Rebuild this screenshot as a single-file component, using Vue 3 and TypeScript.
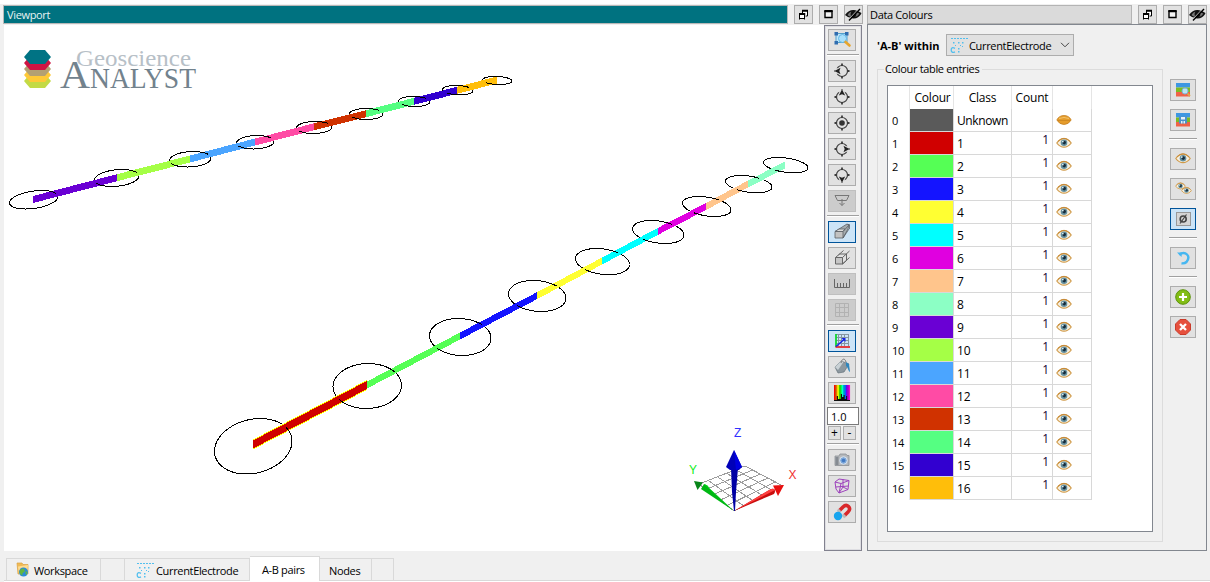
<script setup lang="ts">
interface Entry { id: number; colour: string; name: string }
type Pt = [number, number]
type Ring = [number, number, number, number, number]

const palette = ['#5a5a5a', '#d00000', '#55ff55', '#1414ff', '#ffff32', '#00ffff', '#e000e0', '#ffc58c', '#8cffc5', '#6a00d4', '#a5ff46', '#4ba5ff', '#ff4ba5', '#d03200', '#55ff82', '#3200d0', '#ffbe0a']
const entries: Entry[] = palette.map((colour, id) => ({ id, colour, name: id === 0 ? 'Unknown' : String(id) }))

const near: Pt[] = [[253, 444.5], [367, 385], [460, 336], [537, 295.7], [602, 261], [658, 231.3], [706, 206.5], [748, 184], [785, 165]]
const far: Pt[] = [[33, 199.5], [117, 177.7], [190, 159], [255, 142], [314, 126.8], [366, 113.7], [414, 101.3], [457, 90.3], [497, 80]]
// Each ring: bounding box left, right, top, bottom and the x offset of its top point
const nearRings: Ring[] = [[214.5, 292, 418.5, 474, 7], [333, 401.5, 363.5, 408.5, 1], [429.5, 491, 318.5, 355.5, -2], [508.5, 566, 280.5, 311.5, -4], [575.5, 629.5, 248.5, 274.7, -6], [632.5, 684, 220.5, 243.5, -7], [682.5, 731, 196.5, 216.5, -8], [725.5, 772, 175.5, 192.8, -8], [763.5, 808, 157.5, 172.8, -8]]
const farRings: Ring[] = [[9.5, 58, 190.5, 209, 8], [94.5, 139, 169.5, 186.5, 5], [169.5, 211, 151.5, 167, 3], [236.5, 274, 135.5, 149, 2], [296.5, 332, 121.5, 133.5, 1], [349.5, 383, 108.5, 119.5, 0], [398.5, 430, 96.5, 106.5, -1], [442.5, 473, 85.5, 94.8, -2], [482.5, 512, 76.5, 84.5, -2]]

function segment(a: Pt, b: Pt, h: number): string {
  return `${a[0]},${a[1] - h} ${b[0]},${b[1] - h} ${b[0]},${b[1] + h} ${a[0]},${a[1] + h}`
}
function segments(line: Pt[], h: number, first: number) {
  return line.slice(1).map((p, i) => ({ points: segment(line[i], p, first === 1 && i === 0 ? h + 0.5 : h), colour: palette[first + i] }))
}
function lineY(line: Pt[], x: number): number {
  let i = 0
  while (i < line.length - 2 && x > line[i + 1][0]) i++
  const [a, b] = [line[i], line[i + 1]]
  return a[1] + ((x - a[0]) / (b[0] - a[0])) * (b[1] - a[1])
}
function ringPoints([l, r, t, b, off]: Ring): Pt[] {
  const cx = (l + r) / 2, cy = (t + b) / 2, w = (r - l) / 2, h = (b - t) / 2
  const phi = Math.asin(off / w)
  return Array.from({ length: 145 }, (_, i) => {
    const a = (i * Math.PI) / 72
    return [cx + w * Math.cos(a), cy - h * Math.sin(a + phi)] as Pt
  })
}
function path(pts: Pt[]): string {
  return pts.map((p, i) => `${i ? 'L' : 'M'}${p[0].toFixed(2)} ${p[1].toFixed(2)}`).join('')
}
// Part of a ring that passes in front of the electrode line
function frontPath(ring: Ring, line: Pt[], first: boolean): string {
  const cx = (ring[0] + ring[1]) / 2
  const pts = ringPoints(ring)
  let d = ''
  for (let i = 1; i < pts.length; i++) {
    const [x, y] = pts[i]
    const below = y > lineY(line, x)
    const front = x < cx ? below : first ? below : !below
    if (front) d += path([pts[i - 1], pts[i]])
  }
  return d
}
const rings = [...nearRings, ...farRings].map(r => path(ringPoints(r)))
const fronts = [...nearRings.map((r, i) => frontPath(r, near, i === 0)), ...farRings.map(r => frontPath(r, far, false))]
const bars = [...segments(near, 3.5, 1), ...segments(far, 3.5, 9)]

const O: Pt = [734, 511], X: Pt = [783, 486], Y: Pt = [699, 484]
const grid: string[] = []
for (let i = 0; i <= 5; i++) {
  const k = i / 5
  const T: Pt = [745, 466]
  const mix = (a: Pt, b: Pt): Pt => [a[0] + (b[0] - a[0]) * k, a[1] + (b[1] - a[1]) * k]
  grid.push(path([mix(O, X), mix(Y, T)]), path([mix(O, Y), mix(X, T)]))
}

const tools = ['zoom', '|', 'west', 'north', 'centre', 'east', 'south', 'down!', '|', 'persp*', 'ortho', 'ruler!', 'grid!', '|', 'axes*', 'fill', 'spectrum']
const tools2 = ['camera', 'box', 'magnet']
const sideTools = ['tableZoom', 'tableSave', '|', 'eye', 'eyes', 'null*', '|', 'undo', '|', 'add', 'remove']
const base = (t: string) => t.replace(/[!*]/, '')
const state = (t: string) => ({ off: t.endsWith('!'), on: t.endsWith('*') })
const turn: Record<string, number> = { west: 0, north: 90, east: 180, south: 270 }
const hues = ['#f00', '#f60', '#fc0', '#cf0', '#3f0', '#0f6', '#0fc', '#0cf', '#06f', '#60f', '#c0f', '#f0c']
</script>

<template>
  <div class="app">
    <svg class="defs" width="0" height="0">
      <defs>
        <symbol id="eye" viewBox="0 0 16 12">
          <path d="M.8 6Q4 1.600 8 1.600T15.200 6Q12 10.200 8 10.200T.8 6Z" fill="#f6efe0" stroke="#d09a48" stroke-width="1.200" />
          <circle cx="8" cy="5.800" r="3.300" fill="#64909f" /><circle cx="8.200" cy="5.600" r="1.800" fill="#172c3b" /><circle cx="6.800" cy="4.600" r=".9" fill="#d9edf4" />
          <path d="M2 4.400Q4.800 1.300 8 1.300T14 4.400" fill="none" stroke="#c78a38" />
        </symbol>
        <symbol id="dots" viewBox="0 0 18 16">
          <g fill="#52bfee">
            <path d="M1 1h2v1H1zM4 1h2v1H4zM7 1h2v1H7zM10 1h2v1h-2zM13 1h2v1h-2zM16 1h2v1h-2z" />
            <path d="M3 5h1.500v1.500H3zM8 5h1.500v1.500H8zM12 5h1.500v1.500H12zM5 8h1v1H5zM10 8h1v1h-1z M8 11h1.500v1.500H8zM12 9h1v1h-1zM8 14h1.500v1.500H8z" />
          </g>
          <path d="M5 11.300Q1.200 9.500 1.200 13T5 14.800" fill="none" stroke="#52bfee" stroke-width="1.300" />
        </symbol>
        <symbol id="restore" viewBox="0 0 19 19"><path d="M5 9h6v5H5zM8 5h6v6h-3V9H8z" fill="#fff" /><path d="M8.500 8.500V6M8 5.500h6M13.500 5v6H11.500M5.500 8v6.500M5 9h6.500M10.500 8v6.500M5 13.500h6" fill="none" stroke="#000" stroke-width="1" /><path d="M8 5.800h6M5 9h6" stroke="#000" stroke-width="2" /></symbol>
        <symbol id="max" viewBox="0 0 19 19"><path d="M6 6.500h7v6H6z" fill="#f4f4f4" stroke="#000" stroke-width="1.400" /><path d="M5.300 6h8.400" stroke="#000" stroke-width="2" /></symbol>
        <symbol id="hide" viewBox="0 0 19 19">
          <path d="M1 10Q5 4.500 10 5T17.500 8.500Q14 14 9 13.500T1 10Z" fill="#111" />
          <path d="M3.500 10Q5 7.300 7.300 6.800Q5.800 9 7 11.800Q4.800 11.500 3.500 10ZM12 7Q14 7.500 15.300 8.700Q13.800 11 11.300 12Q13 10 12 7Z" fill="#777" />
          <path d="M4 15L15 3.500" stroke="#ddd" stroke-width="1" /><path d="M5 15.500L16 4" stroke="#000" stroke-width="1.400" />
        </symbol>
      </defs>
    </svg>

    <main class="work">
      <section class="view">
        <header class="bar">
          <div class="title teal"><span>Viewport</span></div>
          <div class="wbtns">
            <i class="wb"><svg><use href="#restore" /></svg></i><i class="wb"><svg><use href="#max" /></svg></i><i class="wb"><svg><use href="#hide" /></svg></i>
          </div>
        </header>
        <div class="body">
          <svg class="scene" viewBox="4 25 820 526">
            <g>
              <path d="M24 81l6-7h15l6 7-6 7H30z" fill="#c3da45" />
              <path d="M24 75l6-7h15l6 7-6 7H30z" fill="#fec938" />
              <path d="M24 69l6-7h15l6 7-6 7H30z" fill="#b3a073" />
              <path d="M24 63l6-7h15l6 7-6 7H30z" fill="#cf1443" />
              <path d="M24 57l6-7h15l6 7-6 7H30z" fill="#007384" />
            </g>
            <g class="logo">
              <text x="76" y="66" font-size="23" textLength="115" lengthAdjust="spacingAndGlyphs" fill="#b7c0c7">Geoscience</text>
              <text x="60" y="88" font-size="41" textLength="30" lengthAdjust="spacingAndGlyphs" fill="#72828d">A</text>
              <text x="90" y="88" font-size="29" textLength="106" lengthAdjust="spacingAndGlyphs" fill="#72828d">NALYST</text>
            </g>
            <g shape-rendering="crispEdges">
              <path v-for="(d, i) in rings" :key="'r' + i" :d="d" fill="none" stroke="#000" />
              <polygon :points="segment(near[0], near[1], 5)" fill="#ffff00" />
              <polygon v-for="(b, i) in bars" :key="'b' + i" :points="b.points" :fill="b.colour" />
              <path v-for="(d, i) in fronts" :key="'f' + i" :d="d" fill="none" stroke="#000" />
              <path v-for="(d, i) in grid" :key="'g' + i" :d="d" fill="none" stroke="#9c9c9c" />
            </g>
            <g>
              <path d="M734 511L701 489L704 484Q708 485 709 488Z" fill="#00b814" /><path d="M734 511L704 484Q708 485 709 488Z" fill="#00e01a" />
              <path d="M694 481l9 1.500-5.500 7.500z" fill="#08861a" />
              <path d="M734 511L770 489.500Q775 487 775 492L774 494Z" fill="#c90d0d" /><path d="M734 511L771 489Q774 488 775 490Z" fill="#ff4040" />
              <path d="M773 485.500l11-.500-6 11z" fill="#e80f0f" />
              <path d="M731 468h7l-2 24-1 19h-1l-2-19z" fill="#0000a4" />
              <path d="M734 450l8 17-3 3h-9l-4-3z" fill="#0000b8" /><path d="M734 450l2 20 6-3z" fill="#0000e0" />
            </g>
            <g class="axis">
              <text x="734" y="436.500" fill="#3030ff">Z</text><text x="689" y="474" fill="#10ee20">Y</text><text x="788.500" y="479" fill="#f03030">X</text>
            </g>
          </svg>

          <aside class="tools">
            <template v-for="(t, i) in tools" :key="i">
              <hr v-if="t === '|'">
              <button v-else class="tb" :class="state(t)">
                <svg viewBox="0 0 26 20">
                  <template v-if="t === 'zoom'">
                    <path d="M7 3.500h11v9H7z" fill="#bfe6fa" stroke="#559fc9" /><path d="M5.500 2h3.500v3.500H5.500zM16 2h3.500v3.500H16zM5.500 11h3.500v3.500H5.500z" fill="#2f6db0" />
                    <circle cx="13.500" cy="8.500" r="4" fill="#a9e0fb" stroke="#62b6e6" /><path d="M16.500 12l4 3.500" stroke="#e7a52c" stroke-width="2.600" stroke-linecap="round" />
                  </template>
                  <g v-else-if="base(t) in turn || t === 'centre'" fill="none" stroke="#3c3c3c">
                    <circle cx="13" cy="10" r="5.500" stroke-width="1.200" />
                    <path d="M13 2.500v2.500M13 15v2.500M5.500 10H8M18 10h2.500" stroke-width="1.800" />
                    <circle v-if="t === 'centre'" cx="13" cy="10" r="2.800" fill="#333" stroke="none" />
                    <g v-else stroke="none" :transform="`rotate(${turn[t]} 13 10)`">
                      <path d="M6.200 7.200h3v5.600h-3z" fill="#e1e1e1" /><path d="M5.500 10l6-3.200-1.200 3.200 1.200 3.200z" fill="#222" />
                    </g>
                  </g>
                  <path v-else-if="t === 'down!'" d="M6 4.500h14l-2.500 5h-9zM13 8v6.500M10.500 12l2.500 2.500 2.500-2.500" fill="none" stroke="#777" />
                  <g v-else-if="t === 'persp*'" stroke="#5a6066" stroke-width=".8">
                    <path d="M6 9.500L18 2l2 1-1 4-5 9z" fill="#a5abae" /><path d="M6 9.500L10 7h6l-2 2.500z" fill="#dcdcdc" /><path d="M6 9.500h8V16H6z" fill="#c2c2c2" /><path d="M14 9.500L20 3M14 16l6-9M18.500 2.500h2V7" fill="none" />
                  </g>
                  <g v-else-if="t === 'ortho'" fill="none" stroke="#666"><path d="M6.500 9.500h7v6.500h-7z" fill="#c6c6c6" /><path d="M6.500 9.500l4-3.500h7v6.500l-4 3.500M13.500 9.500l7-6.500M9.500 7l5-4.500M13.500 16l7-6.500" /></g>
                  <path v-else-if="t === 'ruler!'" d="M5.500 5v8.500h15V5M8.500 9v4.500M11.500 9v4.500M14.500 9v4.500M17.500 9v4.500" fill="none" stroke="#666" />
                  <path v-else-if="t === 'grid!'" d="M6.500 3.500h13v13h-13zM10.500 3.500v13M15.500 3.500v13M6.500 7.500h13M6.500 12.500h13" fill="none" stroke="#b2b2b2" />
                  <g v-else-if="t === 'axes*'" fill="none">
                    <path d="M7 3.500h13M7 6.500h13M7 9.500h13M7 12.500h13M9.500 3v12M12.500 3v12M15.500 3v12M19.500 3v12" stroke="#8495a0" />
                    <path d="M7 3v13" stroke="#10d530" stroke-width="1.800" /><path d="M6.500 16H21" stroke="#e72b2b" stroke-width="1.800" /><path d="M7 15.500l8-7" stroke="#1522e8" stroke-width="1.500" /><path d="M12.500 7h4v4z" fill="#1522e8" />
                  </g>
                  <g v-else-if="t === 'fill'"><path d="M6 10l6-6 8 3-5 8-6 1z" fill="#8d989f" stroke="#64717a" stroke-width=".7" /><path d="M6 10l6-6 2.500 1-5.500 8z" fill="#c9d1d5" /><path d="M12 6c1-5 4-5 5-1" fill="none" stroke="#777" /><path d="M17 5l3 2 1 8c-2-1-2-5-4-6z" fill="#2f86bd" /></g>
                  <g v-else-if="t === 'spectrum'">
                    <rect x="5" y="2" width="16" height="16" fill="#111" />
                    <rect v-for="(h, k) in hues" :key="k" :x="5 + k * 1.333" y="2" width="1.400" :height="[15, 15, 11, 14, 14, 9, 12, 10, 14, 11, 15, 15][k]" :fill="h" />
                  </g>
                </svg>
              </button>
            </template>
            <div class="scale">1.0</div>
            <div class="pm"><button>+</button><button>-</button></div>
            <hr>
            <button v-for="t in tools2" :key="t" class="tb">
              <svg viewBox="0 0 26 20">
                <g v-if="t === 'camera'"><path d="M6 6h4l1-2h6l1 1.500h2v10H6z" fill="#b5b8bb" stroke="#8b8f94" stroke-width=".8" /><path d="M6.500 7h3v8h-3z" fill="#858b92" /><circle cx="14.500" cy="10.500" r="3.800" fill="#7da8da" stroke="#dce5ef" /><circle cx="14.500" cy="10.500" r="1.800" fill="#4279c2" /></g>
                <path v-else-if="t === 'box'" d="M6 6l6 1.500 8-3-1 9-9 3.500-3-4zM6 6l4-3 10 1.500M12 7.500L10 17M6.500 11l13-1M14 3v8l-4 6M14 11l5 2.500" fill="none" stroke="#9e43bd" />
                <g v-else fill="none"><path d="M10 9l4-4q3-3 5.500-.5T19 10l-4 4" stroke="#d9282b" stroke-width="3.600" /><path d="M9 10l2-2M14 15l2-2" stroke="#bbb" stroke-width="3.600" /><circle cx="9" cy="14" r="4.200" fill="#17a5ee" /></g>
              </svg>
            </button>
          </aside>
        </div>
      </section>

      <section class="data">
        <header class="bar">
          <div class="title"><span>Data Colours</span></div>
          <div class="wbtns">
            <i class="wb"><svg><use href="#restore" /></svg></i><i class="wb"><svg><use href="#max" /></svg></i><i class="wb"><svg><use href="#hide" /></svg></i>
          </div>
        </header>
        <div class="panel">
          <div class="pick">
            <b>'A-B' within</b>
            <div class="combo"><svg class="dots"><use href="#dots" /></svg><span>CurrentElectrode</span><svg class="chev" viewBox="0 0 10 6"><path d="M1 .8l4 4 4-4" fill="none" stroke="#444" /></svg></div>
          </div>
          <div class="cols">
            <fieldset class="group">
              <legend>Colour table entries</legend>
              <div class="table">
                <div class="row head"><span /><span>Colour</span><span>Class</span><span>Count</span><span /></div>
                <div v-for="e in entries" :key="e.id" class="row">
                  <span class="id">{{ e.id }}</span>
                  <span :style="{ background: e.colour }" />
                  <span class="name" :class="{ unk: e.id === 0 }">{{ e.name }}</span>
                  <span class="count">{{ e.id ? 1 : '' }}</span>
                  <span class="vis">
                    <svg v-if="e.id" viewBox="0 0 16 12"><use href="#eye" /></svg>
                    <svg v-else viewBox="0 0 16 12"><path d="M.8 6Q3 1.500 8 1.500T15.200 6Q12.500 10.500 8 10.500T.8 6Z" fill="#e59c2b" stroke="#c58225" stroke-width=".8" /><path d="M3 4.500Q8 2.500 13 4.500" fill="none" stroke="#f3c46c" /><path d="M1.500 6.500h13" stroke="#c98421" stroke-width=".8" /></svg>
                  </span>
                </div>
              </div>
            </fieldset>
            <aside class="side">
              <template v-for="(t, i) in sideTools" :key="i">
                <hr v-if="t === '|'">
                <button v-else class="tb" :class="state(t)">
                  <svg viewBox="0 0 24 20">
                    <g v-if="t.startsWith('table')">
                      <path d="M5 3h14v4.500H5z" fill="#3d97e2" /><path d="M5 7.500h14V12H5z" fill="#7dbb22" /><path d="M5 12h14v4.500H5z" fill="#ef6247" />
                      <template v-if="t === 'tableZoom'"><circle cx="14" cy="11" r="3" fill="#bde4f3" stroke="#78b7d9" /><path d="M16.500 13.500l2.500 2.500" stroke="#dda64f" stroke-width="1.800" /></template>
                      <g v-else><path d="M8 6.500h8v7H8z" fill="#4a91cb" /><path d="M10 7h4v2.500h-4zM10 11h1.500v2.500H10zM12.500 11H14v2.500h-1.500z" fill="#e6f1f8" /></g>
                    </g>
                    <use v-else-if="t === 'eye'" href="#eye" x="4" y="3.500" width="16" height="12" />
                    <g v-else-if="t === 'eyes'"><use href="#eye" x="4" y="3" width="11" height="8.250" /><use href="#eye" x="10" y="7.500" width="11" height="8.250" /></g>
                    <g v-else-if="t === 'null*'" fill="none"><rect x="5.500" y="3.500" width="14" height="13" fill="#d5d5d5" stroke="#999" /><circle cx="12.200" cy="10" r="3" stroke="#444" stroke-width="1.600" /><path d="M9 14.500l6.500-9" stroke="#444" stroke-width="1.200" /></g>
                    <g v-else-if="t === 'undo'"><path d="M8 6.500Q13 3.500 16 6.500T15.500 14Q13.500 15.800 10.500 15.200" fill="none" stroke="#46b7f1" stroke-width="2.400" /><path d="M6 4.500l5 0-.5 4.500z" fill="#46b7f1" /></g>
                    <g v-else-if="t === 'add'"><circle cx="12" cy="10" r="7.300" fill="#82bd14" stroke="#5d940d" /><path d="M12 6v8M8 10h8" stroke="#fff" stroke-width="2.200" /></g>
                    <g v-else><path d="M9 2.500h6l4.500 4.500v6L15 17.500H9L4.500 13V7z" fill="#e6503d" stroke="#c93b2b" /><path d="M9 7l6 6M15 7l-6 6" stroke="#fff" stroke-width="2.300" /></g>
                  </svg>
                </button>
              </template>
            </aside>
          </div>
        </div>
      </section>
    </main>

    <nav class="tabs">
      <div class="tab ws"><svg viewBox="0 0 16 16"><path d="M2 1h5l1 1.500h5V12H3z" fill="#f0ba55" stroke="#d9a044" stroke-width=".7" /><path d="M3 4.500L13 3l-1 9H4z" fill="#ffdc91" /><circle cx="8.500" cy="10" r="4.500" fill="#2b8bd8" /><path d="M5.500 7.500q3-2 4 0t-1 3-1 3q-3-1-3-4zM10.500 9l2 1-1 3-1-1z" fill="#63b640" /></svg><span>Workspace</span></div>
      <div class="tab gap1" />
      <div class="tab ce"><svg class="dots"><use href="#dots" /></svg><span>CurrentElectrode</span></div>
      <div class="tab active"><span>A-B pairs</span></div>
      <div class="tab nodes"><span>Nodes</span></div>
      <div class="tab gap2" />
    </nav>
  </div>
</template>

<style>
body { margin: 0; background: #f0f0f0; overflow: hidden; }
</style>
<style scoped>
* { box-sizing: border-box; }
.app { width: 1210px; height: 582px; display: flex; flex-direction: column; background: #f0f0f0; border-top: 4px solid #fff; font: 12px "Open Sans", sans-serif; letter-spacing: -.34px; color: #000; white-space: nowrap; }
.defs { display: block; height: 0; flex: none; }
svg { display: block; }
button { font: inherit; padding: 0; margin: 0; }
.work { display: flex; gap: 4px; height: 547px; padding: 1px 3px 0; }
.view { width: 860px; display: flex; flex-direction: column; }
.data { width: 340px; display: flex; flex-direction: column; }
.bar { display: flex; justify-content: space-between; height: 19px; flex: none; }
.title { height: 19px; border: 1px solid #b4b4b4; background: #dadada; width: 265px; line-height: 18px; padding-left: 2px; }
.teal { width: 785px; background: #007280; color: #e6f2f3; border-color: #b8b8b8; padding-left: 3px; }
.title span { display: inline-block; font-size: 11px; }
.wbtns { display: flex; gap: 6px; }
.wb { width: 19px; height: 19px; border: 1px solid #adadad; background: #e1e1e1; }
.wb svg { width: 19px; height: 19px; margin: -1px; }
.body { display: flex; margin-left: 1px; margin-top: 1px; height: 526px; }
.scene { width: 820px; height: 526px; background: #fff; flex: none; }
.logo { font-family: "Liberation Serif", serif; letter-spacing: 0; }
.axis { font: 12px "Liberation Sans", sans-serif; }
.tools { width: 38px; height: 526px; border: 1px solid #82828f; box-shadow: inset 0 0 0 1px #dedee2; padding: 3px 0 0 3px; display: flex; flex-direction: column; gap: 4px; }
.tb { width: 28px; height: 22px; flex: none; border: 1px solid #adadad; background: #e1e1e1; }
.tb svg { width: 26px; height: 20px; }
.tb.off { background: #ccc; border-color: #bfbfbf; }
.tb.on { background: #cce4f7; border-color: #00549a; }
hr { width: 32px; height: 2px; flex: none; margin: -1px 0 0 -1px; border: 0; border-top: 1px solid #a0a0a0; background: #fff; }
.scale { width: 32px; height: 18px; margin: -1px 0 0 -1px; border: 1px solid #7a7a7a; background: #fff; font-size: 11px; line-height: 18px; padding-left: 3px; letter-spacing: 0; }
.pm { display: flex; gap: 2px; height: 14px; margin-top: -3px; }
.pm button { width: 13px; height: 14px; border: 1px solid #adadad; background: #e1e1e1; line-height: 12px; letter-spacing: 0; }
.panel { height: 527px; border: 1px solid #82878f; }
.pick { display: flex; height: 31px; padding: 9px 0 0 9px; }
.pick b { width: 69px; font-size: 11px; line-height: 23px; letter-spacing: 0; }
.combo { width: 128px; height: 22px; border: 1px solid #adadad; background: #e1e1e1; display: flex; align-items: center; font-size: 11px; padding-left: 3px; }
.dots { width: 18px; height: 16px; }
.combo span { width: 82px; margin-left: 1px; padding-top: 1px; }
.chev { width: 10px; height: 6px; margin-left: 9px; }
.cols { display: flex; }
.group { width: 286px; height: 481px; margin: 5px 0 0 9px; padding: 8px 0 0 9px; border: 1px solid #dcdcdc; min-width: 0; }
.group legend { font-size: 11px; padding: 0 3px 0 1px; margin-left: -3px; height: 17px; line-height: 15px; }
.table { width: 266px; height: 447px; background: #fff; border: 1px solid #82878f; margin-top: -1px; letter-spacing: -.2px; }
.row { width: 204px; height: 23px; display: grid; grid-template-columns: 22px 44px 58px 41px 39px; line-height: 24px; }
.row span { height: 23px; border-right: 1px solid #d8d8d8; border-bottom: 1px solid #d8d8d8; }
.row .id { border-bottom: 0; border-right-color: #e5e5e5; padding-left: 4px; font-size: 11px; }
.head span { border-bottom: 0; text-align: center; border-right-color: #e5e5e5; }
.head span:nth-child(2) { padding-left: 2px; }
.row .name { padding-left: 3px; }
.row .unk { letter-spacing: -.4px; }
.row .count { text-align: right; padding-right: 3px; line-height: 16px; color: #200030; }
.vis svg { width: 16px; height: 12px; margin: 5px 0 0 3px; }
.side { width: 28px; margin: 23px 0 0 6px; display: flex; flex-direction: column; gap: 8px; padding-left: 1px; }
.side .tb { width: 26px; }
.side .tb svg { width: 24px; }
.side hr { width: 28px; }
.tabs { display: flex; align-items: flex-end; height: 30px; margin-left: 4px; padding-left: 2px; font-size: 11px; border-bottom: 1px solid #d9d9d9; flex: none; box-shadow: 0 1px #fff; }
.tab { height: 22px; border: 1px solid #d9d9d9; border-bottom: 0; border-left: 0; display: flex; align-items: center; }
.tab span { padding-top: 1px; }
.ws { width: 95px; border-left: 1px solid #d9d9d9; padding-left: 8px; }
.ws svg { width: 16px; height: 16px; }
.ws span { margin-left: 3px; }
.gap1 { width: 24px; }
.ce { width: 125px; padding-left: 11px; }
.ce span { margin-left: 2px; }
.active { height: 25px; width: 70px; background: #fff; margin-bottom: -1px; padding-left: 12px; }
.nodes { width: 52px; padding-left: 9px; }
.gap2 { width: 22px; }
</style>
